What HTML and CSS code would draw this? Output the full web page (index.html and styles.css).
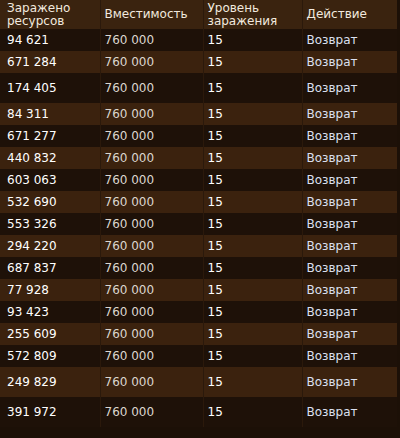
FILE: index.html
```html
<!DOCTYPE html>
<html lang="ru">
<head>
    <meta charset="UTF-8">
    <meta name="viewport" content="width=device-width, initial-scale=1.0">
    <title>Заражение</title>
    <link rel="stylesheet" href="styles.css">
</head>
<body>
    <!-- infected resources list -->
    <table class="infect-table">
        <colgroup>
            <col class="col-res">
            <col class="col-cap">
            <col class="col-lvl">
            <col class="col-act">
        </colgroup>
        <thead>
            <tr>
                <th>Заражено<br>ресурсов</th>
                <th>Вместимость</th>
                <th>Уровень<br>заражения</th>
                <th>Действие</th>
            </tr>
        </thead>
        <tbody>
            <tr><td>94 621</td><td class="cap">760 000</td><td>15</td><td class="act">Возврат</td></tr>
            <tr><td>671 284</td><td class="cap">760 000</td><td>15</td><td class="act">Возврат</td></tr>
            <tr class="tall"><td>174 405</td><td class="cap">760 000</td><td>15</td><td class="act">Возврат</td></tr>
            <tr><td>84 311</td><td class="cap">760 000</td><td>15</td><td class="act">Возврат</td></tr>
            <tr><td>671 277</td><td class="cap">760 000</td><td>15</td><td class="act">Возврат</td></tr>
            <tr><td>440 832</td><td class="cap">760 000</td><td>15</td><td class="act">Возврат</td></tr>
            <tr><td>603 063</td><td class="cap">760 000</td><td>15</td><td class="act">Возврат</td></tr>
            <tr><td>532 690</td><td class="cap">760 000</td><td>15</td><td class="act">Возврат</td></tr>
            <tr><td>553 326</td><td class="cap">760 000</td><td>15</td><td class="act">Возврат</td></tr>
            <tr><td>294 220</td><td class="cap">760 000</td><td>15</td><td class="act">Возврат</td></tr>
            <tr><td>687 837</td><td class="cap">760 000</td><td>15</td><td class="act">Возврат</td></tr>
            <tr><td>77 928</td><td class="cap">760 000</td><td>15</td><td class="act">Возврат</td></tr>
            <tr><td>93 423</td><td class="cap">760 000</td><td>15</td><td class="act">Возврат</td></tr>
            <tr><td>255 609</td><td class="cap">760 000</td><td>15</td><td class="act">Возврат</td></tr>
            <tr><td>572 809</td><td class="cap">760 000</td><td>15</td><td class="act">Возврат</td></tr>
            <tr class="tall"><td>249 829</td><td class="cap">760 000</td><td>15</td><td class="act">Возврат</td></tr>
            <tr class="tall"><td>391 972</td><td class="cap">760 000</td><td>15</td><td class="act">Возврат</td></tr>
        </tbody>
    </table>
</body>
</html>
```

FILE: styles.css
```css
body {
    margin: 0;
    background-color: #1c1007;
    font-family: "DejaVu Sans", Verdana, sans-serif;
    font-size: 12px;
    color: #ffffff;
}
.infect-table {
    width: 397px;
    border-collapse: collapse;
    table-layout: fixed;
}
.col-res { width: 100px; }
.col-cap { width: 103px; }
.col-lvl { width: 99px; }
.col-act { width: 95px; }

th, td {
    padding: 0 3px 0 4px;
    text-align: left;
    vertical-align: middle;
    border-left: 1px solid #2b190b;
}
th:first-child, td:first-child {
    padding-left: 7px;
    border-left: none;
}
th {
    height: 29px;
    line-height: 13px;
    font-weight: normal;
    color: #f2e9df;
    background-color: #3a230f;
}
td {
    height: 22px;
    line-height: 14px;
}
tbody tr:nth-child(odd) {
    background-color: #1e1108;
}
tbody tr:nth-child(even) {
    background-color: #3b220e;
}
tr.tall td {
    height: 30px;
}
.cap {
    color: #dcd6cf;
}
.act {
    color: #dce0f0;
}
```
